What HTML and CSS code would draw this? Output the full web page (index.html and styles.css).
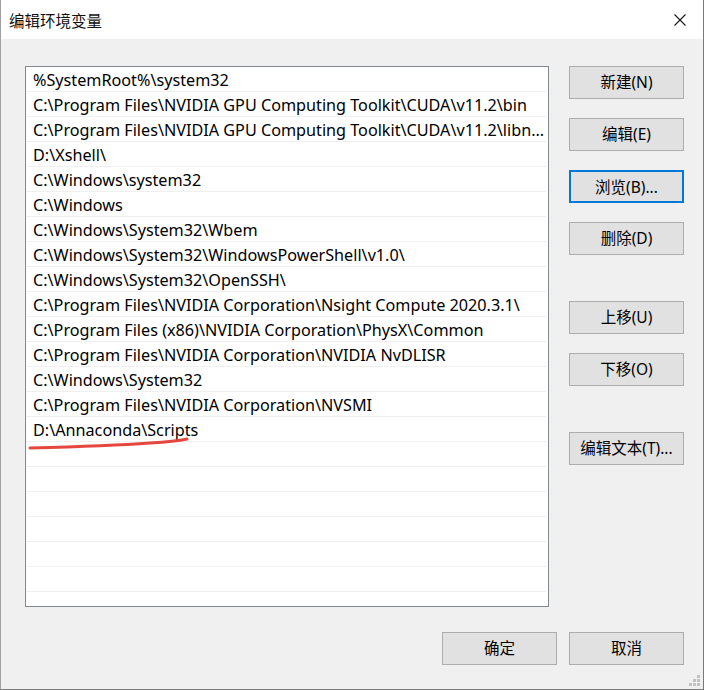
FILE: index.html
```html
<!DOCTYPE html>
<html>
<head>
<meta charset="utf-8">
<link rel="stylesheet" href="styles.css">
</head>
<body>
<div class="window">
  <div class="titlebar">
    <span class="title">编辑环境变量</span>
    <svg class="close" width="14" height="14" viewBox="0 0 14 14"><path d="M1.5 1.5 L12.5 12.5 M12.5 1.5 L1.5 12.5" stroke="#1a1a1a" stroke-width="1.1" fill="none"/></svg>
  </div>
  <div class="content">
    <div class="main">
      <div class="list">
        <div class="row">%SystemRoot%\system32</div>
        <div class="row">C:\Program Files\NVIDIA GPU Computing Toolkit\CUDA\v11.2\bin</div>
        <div class="row">C:\Program Files\NVIDIA GPU Computing Toolkit\CUDA\v11.2\libn...</div>
        <div class="row">D:\Xshell\</div>
        <div class="row">C:\Windows\system32</div>
        <div class="row">C:\Windows</div>
        <div class="row">C:\Windows\System32\Wbem</div>
        <div class="row">C:\Windows\System32\WindowsPowerShell\v1.0\</div>
        <div class="row">C:\Windows\System32\OpenSSH\</div>
        <div class="row">C:\Program Files\NVIDIA Corporation\Nsight Compute 2020.3.1\</div>
        <div class="row">C:\Program Files (x86)\NVIDIA Corporation\PhysX\Common</div>
        <div class="row">C:\Program Files\NVIDIA Corporation\NVIDIA NvDLISR</div>
        <div class="row">C:\Windows\System32</div>
        <div class="row">C:\Program Files\NVIDIA Corporation\NVSMI</div>
        <div class="row">D:\Annaconda\Scripts</div>
        <div class="row"></div>
        <div class="row"></div>
        <div class="row"></div>
        <div class="row"></div>
        <div class="row"></div>
        <div class="row"></div>
      </div>
      <div class="side">
        <button class="btn">新建(N)</button>
        <button class="btn">编辑(E)</button>
        <button class="btn focus">浏览(B)...</button>
        <button class="btn">删除(D)</button>
        <button class="btn gap-big">上移(U)</button>
        <button class="btn">下移(O)</button>
        <button class="btn gap-big">编辑文本(T)...</button>
      </div>
    </div>
    <div class="footer">
      <button class="btn">确定</button>
      <button class="btn">取消</button>
    </div>
  </div>
  <svg class="annot" width="704" height="690" viewBox="0 0 704 690"><path d="M30 448 C 70 447, 110 446, 150 443 C 168 442, 178 441, 187 439" stroke="#e5473f" stroke-width="3" fill="none" stroke-linecap="round"/></svg>
  <svg class="grip" width="12" height="12" viewBox="0 0 12 12" fill="#c2c2c2">
    <rect x="9" y="1" width="3" height="3"/>
    <rect x="5" y="5" width="3" height="3"/><rect x="9" y="5" width="3" height="3"/>
    <rect x="1" y="9" width="3" height="3"/><rect x="5" y="9" width="3" height="3"/><rect x="9" y="9" width="3" height="3"/>
  </svg>
</div>
</body>
</html>
```

FILE: styles.css
```css
* { box-sizing: border-box; }
html, body { margin: 0; padding: 0; }
body { background: #f0f0f0; }
.window {
  position: relative;
  width: 704px;
  height: 690px;
  background: #f0f0f0;
  border-left: 1px solid #a0a0a0;
  border-right: 1px solid #7a7a7a;
  border-bottom: 1px solid #7a7a7a;
  display: flex;
  flex-direction: column;
  font-family: "Noto Sans", "Noto Sans CJK SC", sans-serif;
  color: #000;
}
.titlebar {
  height: 39px;
  background: #fff;
  display: flex;
  align-items: center;
  justify-content: space-between;
  padding-left: 8px;
  padding-right: 16px;
}
.title {
  font-family: "Noto Sans CJK SC", sans-serif;
  font-size: 15.5px;
  color: #111;
}
.close { display: block; }
.content {
  flex: 1;
  display: flex;
  flex-direction: column;
  padding: 27px 19px 0 24px;
}
.main {
  display: flex;
  gap: 20px;
}
.list {
  width: 524px;
  height: 541px;
  border: 1px solid #828790;
  background: #fff;
  overflow: hidden;
}
.row {
  height: 25px;
  border-bottom: 1px solid #f0f0f0;
  margin-right: 2px;
  padding-left: 7px;
  font-size: 16.2px;
  line-height: 26px;
  white-space: nowrap;
  overflow: hidden;
}
.side {
  display: flex;
  flex-direction: column;
  padding-top: 0;
  gap: 19px;
}
.btn {
  width: 115px;
  height: 33px;
  background: #e1e1e1;
  border: 1px solid #adadad;
  font-family: "Noto Sans", "Noto Sans CJK SC", sans-serif;
  font-size: 15.5px;
  color: #000;
  padding: 0;
  margin: 0;
  line-height: 31px;
  border-radius: 0;
}
.btn.focus {
  border: 2px solid #0078d7;
}
.btn.gap-big { margin-top: 27px; }
.footer {
  display: flex;
  justify-content: flex-end;
  gap: 12px;
  margin-top: 25px;
}
.annot {
  position: absolute;
  left: -1px;
  top: 0;
  pointer-events: none;
}
.grip {
  position: absolute;
  right: 3px;
  bottom: 3px;
}
```
